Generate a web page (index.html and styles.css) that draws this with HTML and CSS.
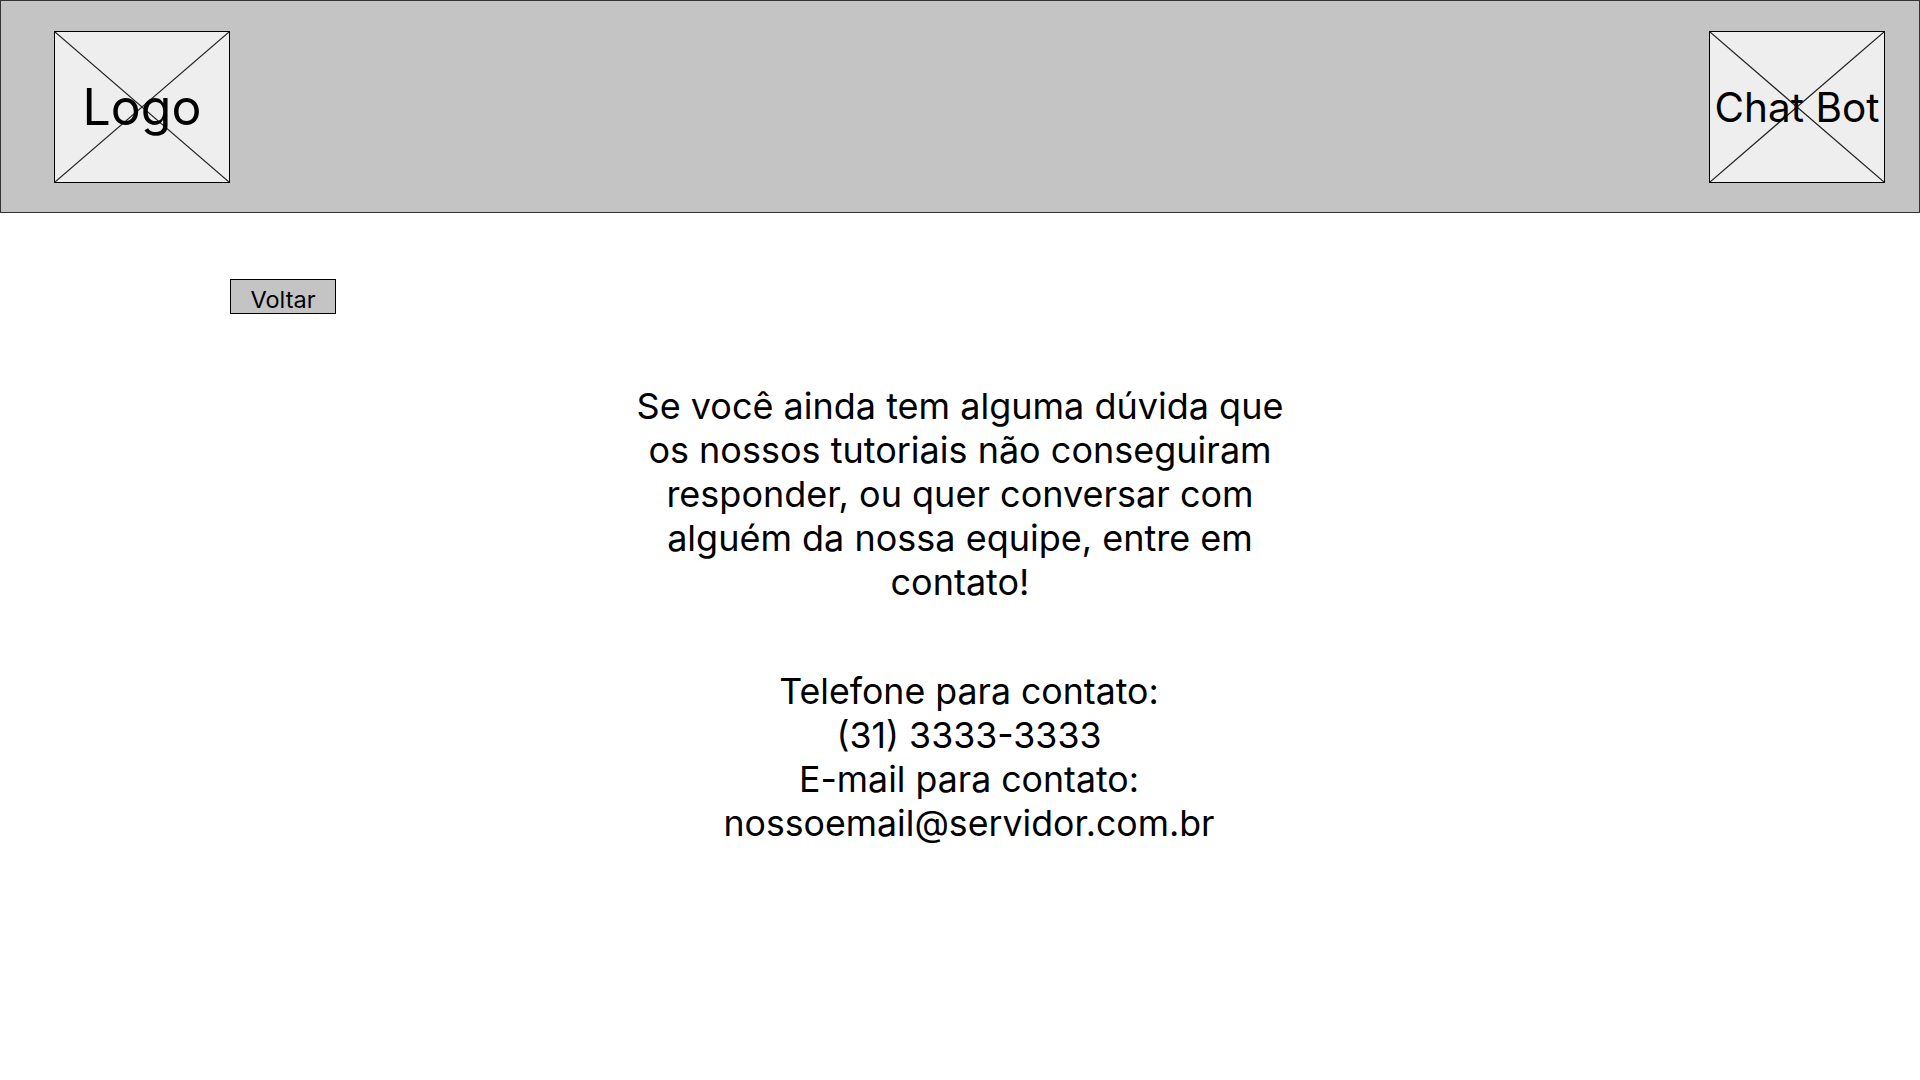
FILE: index.html
```html
<!DOCTYPE html>
<html lang="pt-BR">
<head>
<meta charset="utf-8">
<title>Contato</title>
<link rel="stylesheet" href="styles.css">
</head>
<body>
<header class="topbar">
  <div class="placeholder logo">
    <svg class="cross" viewBox="0 0 100 100" preserveAspectRatio="none"><line x1="0" y1="0" x2="100" y2="100"/><line x1="100" y1="0" x2="0" y2="100"/></svg>
    <span class="ph-text logo-text">Logo</span>
  </div>
  <div class="placeholder chatbot">
    <svg class="cross" viewBox="0 0 100 100" preserveAspectRatio="none"><line x1="0" y1="0" x2="100" y2="100"/><line x1="100" y1="0" x2="0" y2="100"/></svg>
    <span class="ph-text chat-text">Chat Bot</span>
  </div>
</header>
<main class="content">
  <div class="back-row"><button class="back-btn">Voltar</button></div>
  <p class="intro">Se você ainda tem alguma dúvida que os nossos tutoriais não conseguiram responder, ou quer conversar com alguém da nossa equipe, entre em contato!</p>
  <p class="contact">Telefone para contato:<br>(31) 3333-3333<br>E-mail para contato:<br>nossoemail@servidor.com.br</p>
</main>
</body>
</html>
```
FILE: styles.css
```css
* { box-sizing: border-box; }
html, body { margin: 0; padding: 0; background: #fff; }
body { font-family: Inter, "Noto Sans", sans-serif; color: #000; }

.topbar {
  height: 213px;
  background: #c4c4c4;
  border: 1px solid #333;
  display: flex;
  justify-content: space-between;
  align-items: flex-start;
  padding: 30px 34px 0 53px;
}
.placeholder {
  position: relative;
  width: 176px;
  height: 152px;
  background: #eeeeee;
  border: 1px solid #000;
  display: flex;
  align-items: center;
  justify-content: center;
}
.cross {
  position: absolute;
  inset: 0;
  width: 100%;
  height: 100%;
}
.cross line { stroke: #222; stroke-width: 1.2; vector-effect: non-scaling-stroke; }
.ph-text { position: relative; white-space: nowrap; line-height: 1; }
.logo-text { font-size: 50px; }
.chat-text { font-size: 40.5px; padding-top: 2px; }

.content {
  display: flex;
  flex-direction: column;
  align-items: center;
}
.back-row {
  align-self: stretch;
  padding: 66px 0 0 230px;
}
.back-btn {
  width: 106px;
  height: 35px;
  background: #c4c4c4;
  border: 1px solid #000;
  border-radius: 0;
  font-family: Inter, "Noto Sans", sans-serif;
  font-size: 23.5px;
  color: #000;
  padding: 7px 0 0;
  line-height: 1;
}
.intro {
  margin: 70px 0 0;
  max-width: 670px;
  text-align: center;
  font-size: 36px;
  line-height: 44px;
}
.contact {
  margin: 65px 0 0 18px;
  text-align: center;
  font-size: 35.7px;
  line-height: 44px;
}
```
